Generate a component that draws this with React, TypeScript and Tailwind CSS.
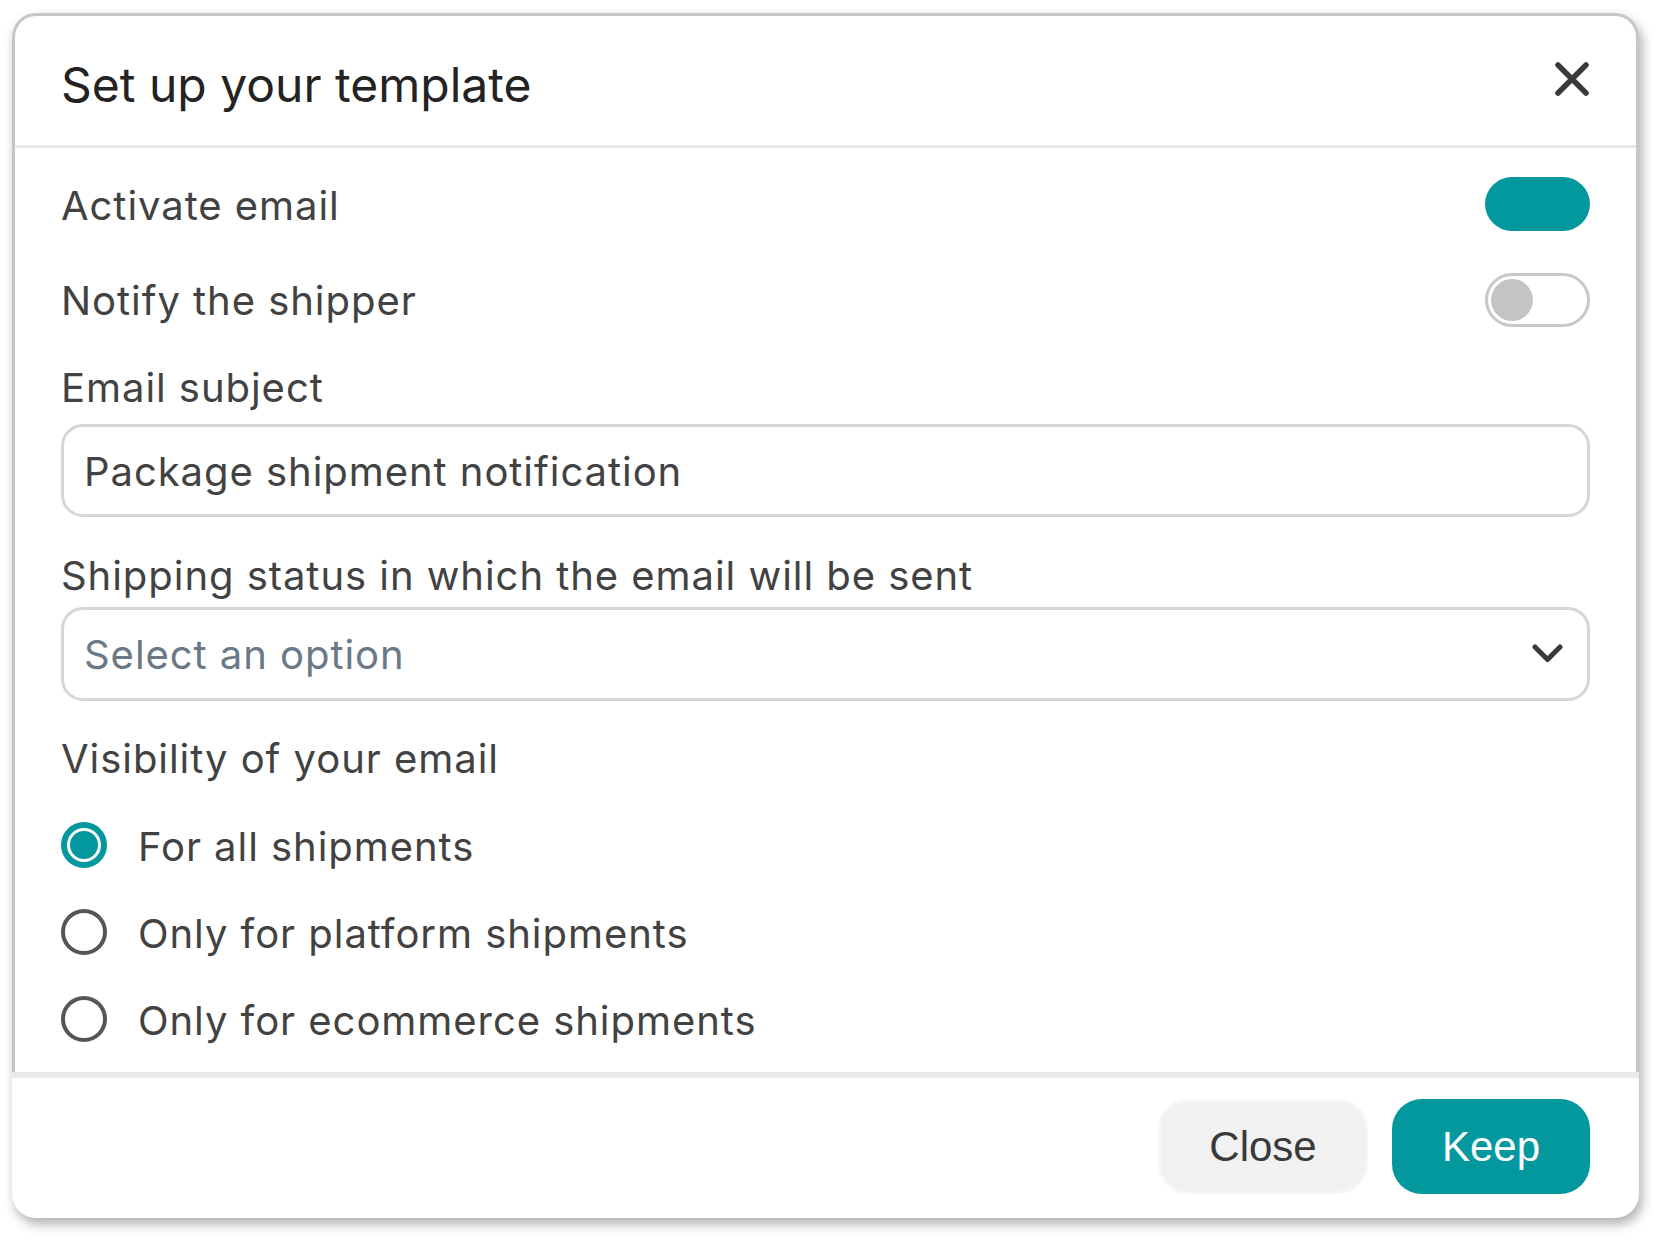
import { useState } from 'react';

// Template settings modal: header, toggles, two fields, a radio group and
// a footer with the two actions. Sizes follow a 2x screenshot, so numbers
// are large on purpose.

const TEAL = '#03989e';

type Option = { id: string; label: string };

const VISIBILITY: readonly Option[] = [
  { id: 'all', label: 'For all shipments' },
  { id: 'platform', label: 'Only for platform shipments' },
  { id: 'ecommerce', label: 'Only for ecommerce shipments' },
];

const Toggle = ({ on, onClick }: { on: boolean; onClick: () => void }) =>
  on ? (
    <button
      type="button"
      onClick={onClick}
      className="h-[54px] w-[105px] shrink-0 rounded-full bg-[#03989e]"
      aria-pressed
    />
  ) : (
    <button
      type="button"
      onClick={onClick}
      className="flex h-[54px] w-[105px] shrink-0 items-center rounded-full border-[3px] border-[#c8c8c8] bg-white pl-[3px]"
      aria-pressed={false}
    >
      <span className="size-[42px] rounded-full bg-[#c4c4c4]" />
    </button>
  );

const Radio = ({ checked }: { checked: boolean }) =>
  checked ? (
    <span className="flex size-[46px] shrink-0 items-center justify-center rounded-full border-[6px] border-[#03989e] bg-white">
      <span className="size-[28px] rounded-full bg-[#03989e]" />
    </span>
  ) : (
    <span className="size-[46px] shrink-0 rounded-full border-[4px] border-[#555555] bg-white" />
  );

export default function App() {
  const [active, setActive] = useState(true);
  const [notify, setNotify] = useState(false);
  const [visibility, setVisibility] = useState('all');

  return (
    <div className="min-h-screen bg-white pt-[13px] pl-[12px] font-['Inter','Noto_Sans',sans-serif]">
      <div className="w-[1627px] rounded-[24px] bg-white shadow-[3px_6px_12px_rgba(0,0,0,0.32)]">
        <div className="rounded-t-[24px] border-x-[3px] border-t-[3px] border-[#c6c6c6]">
          <header className="flex items-start justify-between px-[46px] pt-[40px] pb-[31px]">
            <h1 className="text-[48px] leading-[58px] font-normal text-[#232323]">
              Set up your template
            </h1>
            <button type="button" className="mt-[6px] mr-[1px]" aria-label="Close">
              <svg width="34" height="34" viewBox="0 0 34 34" fill="none">
                <path
                  d="M3 3L31 31M31 3L3 31"
                  stroke="#3a3a3a"
                  strokeWidth="5.5"
                  strokeLinecap="round"
                />
              </svg>
            </button>
          </header>

          <div className="h-[3px] bg-[#e8e8e8]" />

          <div className="px-[46px] pt-[29px] pb-[30px] text-[40px] leading-[48px] tracking-[0.95px] text-[#424242]">
            <div className="flex h-[54px] items-center justify-between">
              <span className="pt-[4px]">Activate email</span>
              <Toggle on={active} onClick={() => setActive(!active)} />
            </div>

            <div className="mt-[42px] flex h-[54px] items-center justify-between">
              <span className="pt-[2px]">Notify the shipper</span>
              <Toggle on={notify} onClick={() => setNotify(!notify)} />
            </div>

            <label className="mt-[37px] block">Email subject</label>
            <div className="mt-[12px] flex h-[93px] items-center rounded-[22px] border-[3px] border-[#d6d6d6] px-[20px]">
              <span className="pt-[3px]">Package shipment notification</span>
            </div>

            <label className="mt-[35px] block">Shipping status in which the email will be sent</label>
            <div className="mt-[7px] flex h-[94px] items-center justify-between rounded-[22px] border-[3px] border-[#d6d6d6] pr-[24px] pl-[20px]">
              <span className="pt-[2px] text-[#6b7886]">Select an option</span>
              <svg width="31" height="20" viewBox="0 0 31 20" fill="none">
                <path
                  d="M3 3L15.5 15.5L28 3"
                  stroke="#3a3a3a"
                  strokeWidth="5"
                  strokeLinecap="round"
                  strokeLinejoin="round"
                />
              </svg>
            </div>

            <p className="mt-[34px]">Visibility of your email</p>
            <div className="mt-[39px] flex flex-col gap-[41px]">
              {VISIBILITY.map((option) => (
                <button
                  key={option.id}
                  type="button"
                  onClick={() => setVisibility(option.id)}
                  className="flex h-[46px] items-center gap-[31px] text-left"
                >
                  <Radio checked={visibility === option.id} />
                  <span className="pt-[3px]">{option.label}</span>
                </button>
              ))}
            </div>
          </div>
        </div>

        <div className="h-[6px] bg-[#e9e9e9]" />

        <footer className="flex justify-end gap-[24px] pt-[21px] pr-[49px] pb-[24px] pl-[47px] font-['Liberation_Sans',Arial,sans-serif] text-[42px]">
          <button
            type="button"
            className="h-[95px] w-[210px] rounded-[30px] border-[3px] border-[#f6f6f6] bg-[#f1f1f1] text-[#3a3a3a]"
          >
            Close
          </button>
          <button
            type="button"
            className="h-[95px] w-[198px] rounded-[30px] text-white"
            style={{ backgroundColor: TEAL }}
          >
            Keep
          </button>
        </footer>
      </div>
    </div>
  );
}
